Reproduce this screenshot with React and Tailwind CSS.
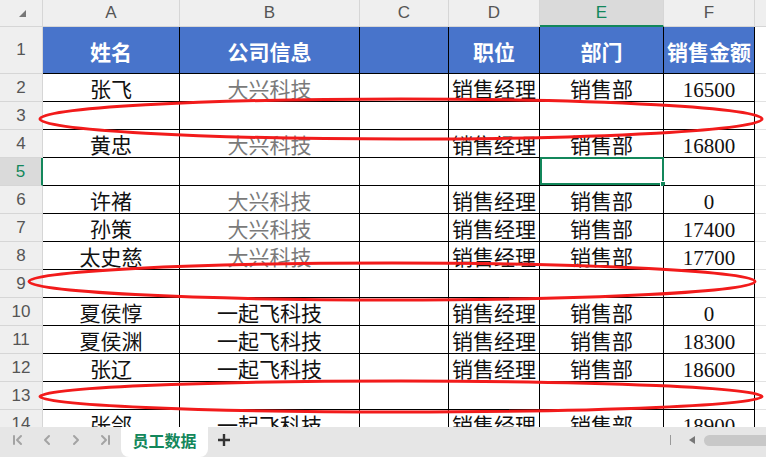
import React from "react";

const cols = ["A", "B", "C", "D", "E", "F"];

const rows = [
  ["张飞", "大兴科技", "", "销售经理", "销售部", "16500"],
  null,
  ["黄忠", "大兴科技", "", "销售经理", "销售部", "16800"],
  null,
  ["许褚", "大兴科技", "", "销售经理", "销售部", "0"],
  ["孙策", "大兴科技", "", "销售经理", "销售部", "17400"],
  ["太史慈", "大兴科技", "", "销售经理", "销售部", "17700"],
  null,
  ["夏侯惇", "一起飞科技", "", "销售经理", "销售部", "0"],
  ["夏侯渊", "一起飞科技", "", "销售经理", "销售部", "18300"],
  ["张辽", "一起飞科技", "", "销售经理", "销售部", "18600"],
  null,
  ["张郃", "一起飞科技", "", "销售经理", "销售部", "18900"],
];

const headers = ["姓名", "公司信息", "", "职位", "部门", "销售金额"];

const cellFont = { fontFamily: '"Liberation Serif", "Noto Sans CJK SC", serif' };
const uiFont = { fontFamily: '"Liberation Sans", "Noto Sans CJK SC", sans-serif' };

const NavIcon = ({ d }) => (
  <svg width="14" height="14" viewBox="0 0 14 14" fill="none" stroke="#a3a3a3" strokeWidth="2" strokeLinecap="round" strokeLinejoin="round">
    <path d={d} />
  </svg>
);

export default function App() {
  return (
    <div className="relative w-[766px] h-[457px] overflow-hidden bg-white flex flex-col" style={uiFont}>
      <div className="flex-1 overflow-hidden">
        <div className="grid grid-cols-[43px_137px_180px_89px_91px_124px_91px_1fr] grid-rows-[27px_47px_repeat(13,28px)]">
          {/* column header row */}
          <div className="bg-[#efefef] border-r border-b border-[#d6d6d6] flex items-end justify-center pb-[9px] pl-[2px]">
            <div className="w-0 h-0 border-l-[7px] border-l-transparent border-b-[7px] border-b-[#777]" />
          </div>
          {cols.map((c) => (
            <div
              key={c}
              className={
                c === "E"
                  ? "bg-[#dadada] border-r border-[#d6d6d6] border-b-2 border-b-[#13875b] flex items-center justify-center text-[17px] text-[#13875b]"
                  : "bg-[#efefef] border-r border-b border-[#d6d6d6] flex items-center justify-center text-[17px] text-[#555]"
              }
            >
              {c}
            </div>
          ))}
          <div className="bg-[#efefef] border-b border-[#d6d6d6]" />

          {/* row 1 */}
          <div className="bg-[#efefef] border-r border-b border-[#d6d6d6] flex items-center justify-center text-[17px] text-[#555]">1</div>
          {headers.map((h, i) => (
            <div
              key={i}
              className="bg-[#4874cb] border-r border-b border-black flex items-center justify-center pt-[6px] text-[21px] leading-none font-bold text-white whitespace-nowrap"
              style={cellFont}
            >
              {h}
            </div>
          ))}
          <div className="border-b border-[#e2e2e2]" />

          {rows.map((r, idx) => {
            const n = idx + 2;
            const sel = n === 5;
            return (
              <React.Fragment key={n}>
                <div
                  className={
                    sel
                      ? "bg-[#dadada] border-b border-[#d6d6d6] border-r-2 border-r-[#13875b] flex items-center justify-center text-[17px] text-[#13875b]"
                      : "bg-[#efefef] border-r border-b border-[#d6d6d6] flex items-center justify-center text-[17px] text-[#555]"
                  }
                >
                  {n}
                </div>
                {cols.map((c, ci) => (
                  <div
                    key={c}
                    className={
                      "relative border-r border-b border-black flex items-center justify-center pt-[5px] text-[21px] leading-none whitespace-nowrap " +
                      (ci === 1 && r && r[1] === "大兴科技" ? "text-[#7a7a7a]" : "text-[#111]")
                    }
                    style={cellFont}
                  >
                    {r ? r[ci] : ""}
                    {sel && c === "E" && (
                      <div className="absolute -top-px left-0 -right-px bottom-0 border-2 border-[#13875b]">
                        <div className="absolute -right-[4px] -bottom-[4px] w-[6px] h-[6px] bg-[#13875b] border border-white" />
                      </div>
                    )}
                  </div>
                ))}
                <div className="border-b border-[#e2e2e2]" />
              </React.Fragment>
            );
          })}
        </div>
      </div>

      {/* sheet tab bar */}
      <div className="h-[30px] shrink-0 bg-[#e6e6e6] flex items-start">
        <div className="flex items-center gap-[15px] pl-[11px] h-[30px] pb-[4px]">
          <NavIcon d="M3 3v8M10 3L6 7l4 4" />
          <NavIcon d="M9 3L5 7l4 4" />
          <NavIcon d="M5 3l4 4-4 4" />
          <NavIcon d="M4 3l4 4-4 4M11 3v8" />
        </div>
        <div className="ml-[9px] w-[87px] h-[30px] bg-white rounded-b-[8px] flex items-center justify-center pb-[4px] text-[16px] font-bold text-[#13875b]" style={{ fontFamily: '"Noto Sans CJK SC", sans-serif' }}>
          员工数据
        </div>
        <div className="ml-[9px] h-[30px] flex items-center pb-[4px]">
          <svg width="14" height="14" viewBox="0 0 14 14" stroke="#333" strokeWidth="2.4">
            <path d="M7 1v12M1 7h12" />
          </svg>
        </div>
        <div className="ml-auto flex items-center h-[30px] pb-[4px]">
          <div className="w-px h-[10px] bg-[#9a9a9a]" />
          <div className="ml-[18px] w-0 h-0 border-y-[4px] border-y-transparent border-r-[6px] border-r-[#777]" />
          <div className="ml-[9px] w-[62px] h-[11px] rounded-l-full bg-[#c8c8c8]" />
        </div>
      </div>

      {/* red annotation ellipses */}
      <svg className="absolute inset-0 pointer-events-none" width="766" height="457">
        <ellipse cx="401" cy="119" rx="361" ry="20" fill="none" stroke="#f21b1b" strokeWidth="3" />
        <ellipse cx="392" cy="281.5" rx="363" ry="18.5" fill="none" stroke="#f21b1b" strokeWidth="3" />
        <ellipse cx="401" cy="396.5" rx="361" ry="15.5" fill="none" stroke="#f21b1b" strokeWidth="3" />
      </svg>
    </div>
  );
}
